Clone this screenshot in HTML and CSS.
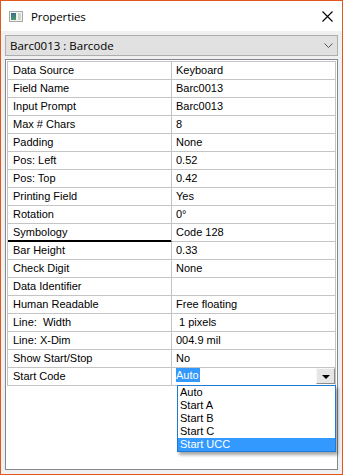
FILE: index.html
```html
<!DOCTYPE html>
<html>
<head>
<meta charset="utf-8">
<link rel="stylesheet" href="styles.css">
</head>
<body>
<div class="window">
  <div class="titlebar">
    <svg class="appicon" width="14" height="11" viewBox="0 0 14 11">
      <defs>
        <linearGradient id="g1" x1="0" y1="0" x2="0" y2="1">
          <stop offset="0" stop-color="#3b6f8c"/>
          <stop offset="1" stop-color="#4e9a66"/>
        </linearGradient>
      </defs>
      <rect x="0.5" y="0.5" width="13" height="10" fill="#f2f2f2" stroke="#a9a9a9"/>
      <rect x="2" y="2" width="5" height="7" fill="url(#g1)"/>
      <rect x="9" y="2" width="3" height="7" fill="#c9dccb"/>
    </svg>
    <span class="title">Properties</span>
    <svg class="close" width="11" height="11" viewBox="0 0 11 11">
      <path d="M0.5 0.5 L10.5 10.5 M10.5 0.5 L0.5 10.5" stroke="#000" stroke-width="1.1" fill="none"/>
    </svg>
  </div>
  <div class="content">
    <div class="combo">
      <span class="combo-text">Barc0013 : Barcode</span>
      <svg class="chev" width="9" height="5" viewBox="0 0 9 5">
        <path d="M0.5 0.5 L4.5 4.5 L8.5 0.5" stroke="#555" stroke-width="1" fill="none"/>
      </svg>
    </div>
    <div class="grid">
      <div class="table">
        <div class="row"><div class="lbl">Data Source</div><div class="val">Keyboard</div></div>
        <div class="row"><div class="lbl">Field Name</div><div class="val">Barc0013</div></div>
        <div class="row"><div class="lbl">Input Prompt</div><div class="val">Barc0013</div></div>
        <div class="row"><div class="lbl">Max # Chars</div><div class="val">8</div></div>
        <div class="row"><div class="lbl">Padding</div><div class="val">None</div></div>
        <div class="row"><div class="lbl">Pos: Left</div><div class="val">0.52</div></div>
        <div class="row"><div class="lbl">Pos: Top</div><div class="val">0.42</div></div>
        <div class="row"><div class="lbl">Printing Field</div><div class="val">Yes</div></div>
        <div class="row"><div class="lbl">Rotation</div><div class="val">0°</div></div>
        <div class="row"><div class="lbl focus">Symbology</div><div class="val">Code 128</div></div>
        <div class="row"><div class="lbl">Bar Height</div><div class="val">0.33</div></div>
        <div class="row"><div class="lbl">Check Digit</div><div class="val">None</div></div>
        <div class="row"><div class="lbl">Data Identifier</div><div class="val"></div></div>
        <div class="row"><div class="lbl">Human Readable</div><div class="val">Free floating</div></div>
        <div class="row"><div class="lbl">Line:&nbsp; Width</div><div class="val">&nbsp;1 pixels</div></div>
        <div class="row"><div class="lbl">Line: X-Dim</div><div class="val">004.9 mil</div></div>
        <div class="row"><div class="lbl">Show Start/Stop</div><div class="val">No</div></div>
        <div class="row"><div class="lbl">Start Code</div>
          <div class="val edit">
            <span class="sel">Auto</span>
            <div class="dropbtn"><span class="tri"></span></div>
            <div class="list">
              <div class="item">Auto</div>
              <div class="item">Start A</div>
              <div class="item">Start B</div>
              <div class="item">Start C</div>
              <div class="item active">Start UCC</div>
            </div>
          </div>
        </div>
      </div>
    </div>
  </div>
</div>
</body>
</html>
```
FILE: styles.css
```css
html, body {
  margin: 0;
  padding: 0;
  background: #ffffff;
}
.window {
  width: 343px;
  height: 475px;
  box-sizing: border-box;
  border: 1px solid #e3571c;
  display: flex;
  flex-direction: column;
  background: #f0f0f0;
}
.titlebar {
  height: 30px;
  background: #ffffff;
  display: flex;
  align-items: center;
  flex: none;
}
.appicon {
  margin-left: 8px;
  margin-top: 0px;
  flex: none;
}
.title {
  margin-left: 8px;
  font-family: "Open Sans", "Noto Sans", sans-serif;
  font-size: 11.5px;
  color: #000;
  flex: 1;
  letter-spacing: -0.1px;
}
.close {
  margin-right: 9px;
  flex: none;
}
.content {
  flex: 1;
  display: flex;
  flex-direction: column;
  padding: 4px 4px 4px 4px;
  min-height: 0;
}
.combo {
  height: 21px;
  box-sizing: border-box;
  border: 1px solid #adadad;
  background: #e1e1e1;
  display: flex;
  align-items: center;
  padding-left: 4px;
  padding-right: 4px;
  flex: none;
}
.combo-text {
  flex: 1;
  font-family: "Open Sans", "Noto Sans", sans-serif;
  font-size: 11.5px;
  color: #000;
}
.chev {
  margin-right: 0px;
}
.grid {
  margin-top: 3px;
  flex: 1;
  border: 1px solid #828790;
  background: #ffffff;
  padding: 1px 1px 0 1px;
  min-height: 0;
}
.table {
  border: 1px solid #c4c4c4;
  border-bottom: none;
  display: flex;
  flex-direction: column;
}
.row {
  display: grid;
  grid-template-columns: 164px 1fr;
  height: 18px;
}
.lbl, .val {
  box-sizing: border-box;
  height: 18px;
  border-bottom: 1px solid #c4c4c4;
  font-family: "Liberation Sans", Arial, sans-serif;
  font-size: 11px;
  line-height: 17px;
  color: #000;
  white-space: nowrap;
}
.lbl {
  border-right: 1px solid #c4c4c4;
  padding-left: 5px;
}
.lbl.focus {
  border-bottom-color: #000;
  box-shadow: inset 0 -1px 0 #000;
}
.val {
  padding-left: 4px;
}
.val.edit {
  position: relative;
}
.sel {
  display: inline-block;
  background: #3399ff;
  color: #fff;
  height: 14px;
  line-height: 14px;
  vertical-align: top;
  padding-right: 1px;
}
.dropbtn {
  position: absolute;
  right: 0;
  top: 0;
  width: 19px;
  height: 16px;
  box-sizing: border-box;
  background: #e6e6e6;
  border-top: 1px solid #f8f8f8;
  border-left: 1px solid #f8f8f8;
  border-right: 1px solid #8a8a8a;
  border-bottom: 1px solid #8a8a8a;
  display: flex;
  align-items: center;
  justify-content: center;
}
.tri {
  width: 0;
  height: 0;
  border-left: 4px solid transparent;
  border-right: 4px solid transparent;
  border-top: 4px solid #000;
  margin-top: 1px;
}
.list {
  position: absolute;
  left: 5px;
  top: 17px;
  width: 159px;
  box-sizing: border-box;
  border: 1px solid #1f7ad6;
  background: #fff;
  box-shadow: 2px 3px 3px rgba(0, 0, 0, 0.35);
  z-index: 2;
}
.item {
  height: 13px;
  line-height: 13px;
  padding-left: 2px;
  font-family: "Liberation Sans", Arial, sans-serif;
  font-size: 11px;
  color: #000;
}
.item.active {
  background: #3399ff;
  color: #fff;
}
```
